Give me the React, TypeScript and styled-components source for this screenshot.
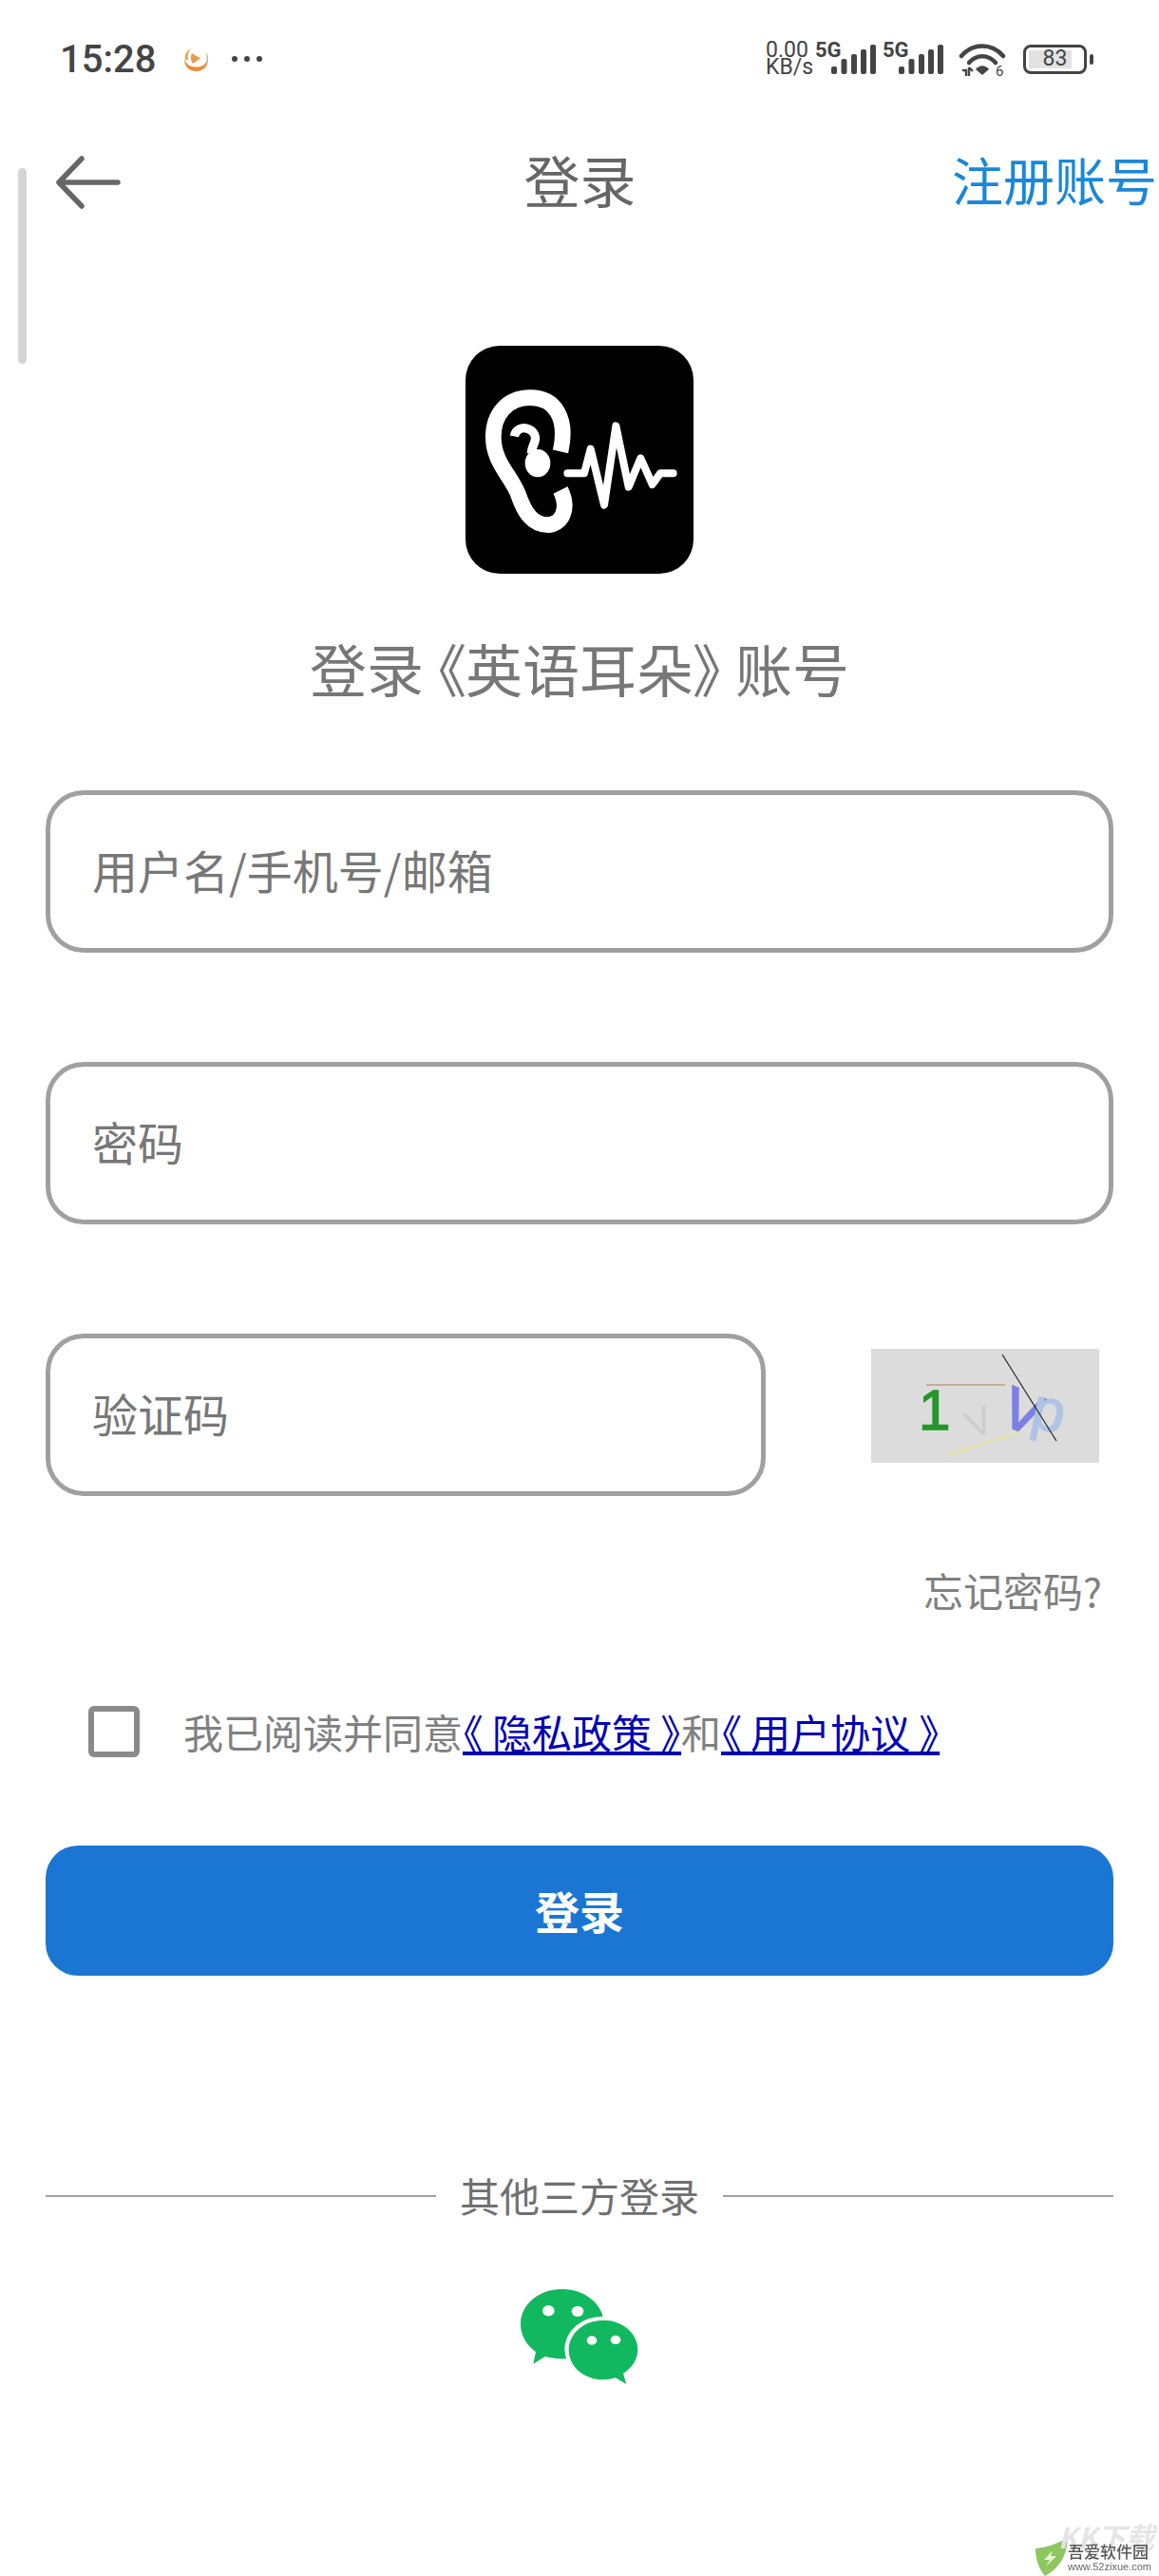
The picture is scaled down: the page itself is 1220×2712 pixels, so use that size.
import React from 'react';
import styled, { createGlobalStyle } from 'styled-components';

const GlobalStyle = createGlobalStyle`
  html, body {
    margin: 0;
    padding: 0;
    background: #fff;
  }
  * {
    box-sizing: border-box;
  }
`;

const cjk = `"Noto Sans CJK SC", "Noto Sans", sans-serif`;

function SignalBars() {
  const bars = [
    { x: 0, h: 8 },
    { x: 10.5, h: 16 },
    { x: 21, h: 21 },
    { x: 31, h: 26 },
    { x: 41, h: 31 },
  ];
  return (
    <svg width="47" height="31" viewBox="0 0 47 31">
      {bars.map((bar) => (
        <rect key={bar.x} x={bar.x} y={31 - bar.h} width="6" height={bar.h} rx="2" fill="#444" />
      ))}
    </svg>
  );
}

function WifiIcon() {
  return (
    <svg width="48" height="37" viewBox="0 0 48 37">
      <g fill="none" stroke="#444" strokeWidth="4.5" strokeLinecap="round">
        <path d="M2 15 C14 1 34 1 46 15" />
        <path d="M10 22 C18 13 30 13 38 22" />
      </g>
      <path d="M17 29 C21 24 27 24 31 29 L24 35 Z" fill="#444" />
      <path d="M3 30 H7 V36 M10 36 V27 M10 27 L14 31" fill="none" stroke="#444" strokeWidth="2.4" />
      <text x="38" y="36" fontFamily="Roboto, sans-serif" fontSize="15" fill="#444">
        6
      </text>
    </svg>
  );
}

function PlayerBadge() {
  return (
    <svg width="27" height="25" viewBox="0 0 27 25">
      <circle cx="13.5" cy="12.5" r="12.5" fill="#fff" />
      <path d="M1 12 C1 20 6 25 13.5 25 C21 25 26 20 26 12 C24 18 20 20.5 13.5 20.5 C7 20.5 3 18 1 12 Z" fill="#e98a3c" />
      <path d="M23 18 C25 16 26 14 26 11 C26 8 25 6 24 5 C25 9 25 14 23 18 Z" fill="#a9c48e" />
      <path d="M2 13 C1 7 4 3 8 1 C5 5 4 9 5 13 Z" fill="#f0a15c" />
      <path d="M9 6 L18 11.5 L10 17 C7.5 14 7.5 9 9 6 Z" fill="#eb9a52" />
    </svg>
  );
}

function EarLogo() {
  return (
    <svg width="240" height="240" viewBox="150 72 720 720">
      <path
        d="M450 406 C474 300 432 236 355 236 C280 236 238 290 238 360 C238 440 292 480 316 540 C336 600 362 638 410 638 C452 636 480 590 450 528"
        fill="none"
        stroke="#fff"
        strokeWidth="50"
      />
      <path
        d="M304 358 C308 335 330 328 346 334 C366 341 374 358 369 374 C364 390 358 396 358 412"
        fill="none"
        stroke="#fff"
        strokeWidth="28"
      />
      <ellipse cx="378" cy="443" rx="40" ry="44" fill="#fff" />
      <polyline
        points="472,475 525,475 545,398 588,575 625,325 665,518 703,427 740,510 765,475 806,475"
        fill="none"
        stroke="#fff"
        strokeWidth="24"
        strokeLinecap="round"
        strokeLinejoin="round"
      />
    </svg>
  );
}

function CaptchaImage() {
  return (
    <svg width="240" height="120" viewBox="0 0 240 120">
      <rect width="240" height="120" fill="#dcdcdc" />
      <line x1="58" y1="38" x2="141" y2="38" stroke="#b9a185" strokeWidth="1.6" />
      <line x1="80" y1="112" x2="156" y2="88" stroke="#e3e3b0" strokeWidth="3" />
      <g fontFamily="'Liberation Sans', sans-serif">
        <text x="50" y="85" fontSize="60" fill="#24962a" stroke="#24962a" strokeWidth="1.5">
          1
        </text>
        <text x="-13" y="0" fontSize="40" fill="#cdcdcd" transform="translate(118 90) rotate(-22)">
          V
        </text>
        <text x="-20" y="0" fontSize="60" fill="#7c80e6" stroke="#7c80e6" strokeWidth="2" transform="translate(152 85) rotate(22)">
          V
        </text>
        <text x="0" y="0" fontSize="62" fill="#afc4e4" stroke="#afc4e4" strokeWidth="1.5" transform="translate(166 82) rotate(12)">
          p
        </text>
      </g>
      <line x1="138" y1="6" x2="195" y2="97" stroke="#222" strokeWidth="1.2" />
    </svg>
  );
}

function WechatIcon() {
  return (
    <svg width="220" height="160" viewBox="0 0 660 480">
      <path
        d="M275 90 C348 90 405 138 408 198 L400 320 L290 310 C258 310 232 306 222 302 L184 326 L192 288 C162 266 144 236 144 200 C144 138 202 90 275 90 Z"
        fill="#12b85f"
      />
      <ellipse cx="403" cy="280" rx="120" ry="104" fill="#fff" />
      <path
        d="M405 188 C466 188 514 229 514 280 C514 312 496 340 468 356 L478 390 L444 370 C432 374 418 376 405 376 C344 376 296 334 296 282 C296 230 344 188 405 188 Z"
        fill="#12b85f"
      />
      <ellipse cx="232" cy="158" rx="19" ry="17" fill="#fff" />
      <ellipse cx="324" cy="160" rx="19" ry="17" fill="#fff" />
      <ellipse cx="369" cy="252" rx="16" ry="14" fill="#fff" />
      <ellipse cx="444" cy="250" rx="16" ry="14" fill="#fff" />
    </svg>
  );
}

// the book-title marks are narrower than a full em here, the gap next to them stays underlined
function Policy({ name }: { name: string }) {
  return (
    <PolicyLink>
      <MarkGap>《</MarkGap>
      {name.slice(0, -1)}
      <MarkGap>{name.slice(-1)}</MarkGap>》
    </PolicyLink>
  );
}

function App() {
  return (
    <Page>
      <GlobalStyle />
      <ScrollThumb />
      <StatusBar>
        <StatusLeft>
          <Clock>15:28</Clock>
          <PlayerBadge />
          <MoreDots>
            <Dot />
            <Dot />
            <Dot />
          </MoreDots>
        </StatusLeft>
        <StatusRight>
          <NetSpeed>
            <span>0.00</span>
            <span>KB/s</span>
          </NetSpeed>
          <SimSlot>
            <SimLabel>5G</SimLabel>
            <SimBars>
              <SignalBars />
            </SimBars>
          </SimSlot>
          <SimSlot>
            <SimLabel>5G</SimLabel>
            <SimBars>
              <SignalBars />
            </SimBars>
          </SimSlot>
          <WifiSlot>
            <WifiIcon />
          </WifiSlot>
          <Battery>
            <BatteryFill />
            <BatteryLevel>83</BatteryLevel>
          </Battery>
          <BatteryTip />
        </StatusRight>
      </StatusBar>

      <NavBar>
        <BackButton aria-label="返回">
          <svg width="68" height="56" viewBox="0 0 68 56">
            <path
              d="M27 3 L3 28 L27 53 M3 28 H65"
              fill="none"
              stroke="#666"
              strokeWidth="5.5"
              strokeLinecap="round"
              strokeLinejoin="round"
            />
          </svg>
        </BackButton>
        <NavTitle>登录</NavTitle>
        <RegisterLink>注册账号</RegisterLink>
      </NavBar>

      <LogoBox>
        <EarLogo />
      </LogoBox>
      <Subtitle>
        登录<BookName>《英语耳朵》</BookName>账号
      </Subtitle>

      <Form>
        <Field placeholder="用户名/手机号/邮箱" />
        <Field placeholder="密码" type="password" />
        <CaptchaRow>
          <Field placeholder="验证码" />
          <CaptchaImage />
        </CaptchaRow>
      </Form>

      <ForgotRow>忘记密码?</ForgotRow>

      <AgreementRow>
        <CheckBox />
        <AgreementText>
          我已阅读并同意
          <Policy name="隐私政策" />和
          <Policy name="用户协议" />
        </AgreementText>
      </AgreementRow>

      <LoginButton>登录</LoginButton>

      <DividerRow>
        <DividerLine />
        <DividerText>其他三方登录</DividerText>
        <DividerLine />
      </DividerRow>

      <WechatRow>
        <WechatIcon />
      </WechatRow>

      <Watermark>
        <WatermarkGhost>KK下载</WatermarkGhost>
        <svg width="35" height="40" viewBox="0 0 35 40">
          <path d="M1 11 C12 10 24 6 35 0 C34 19 26 32 11 40 C4 32 1 21 1 11 Z" fill="#8cc760" />
          <path d="M19 13 L10 23 L16 23 L12 30 L23 19 L17 19 Z" fill="#e6f3d8" />
        </svg>
        <WatermarkText>
          <WatermarkName>吾爱软件园</WatermarkName>
          <WatermarkUrl>www.52zixue.com</WatermarkUrl>
        </WatermarkText>
      </Watermark>
    </Page>
  );
}

const Page = styled.div`
  position: relative;
  width: 1220px;
  height: 2712px;
  overflow: hidden;
  background: #fff;
  font-family: ${cjk};
`;

const ScrollThumb = styled.div`
  position: absolute;
  left: 19px;
  top: 177px;
  width: 9px;
  height: 206px;
  border-radius: 5px;
  background: #d4d4d4;
`;

const StatusBar = styled.div`
  display: flex;
  justify-content: space-between;
  align-items: center;
  height: 124px;
  padding: 0 69px 0 63px;
  color: #444;
`;

const StatusLeft = styled.div`
  display: flex;
  align-items: center;
  gap: 29px;
`;

const Clock = styled.span`
  font-family: Roboto, sans-serif;
  font-size: 40px;
  font-weight: 500;
`;

const MoreDots = styled.div`
  display: flex;
  gap: 7px;
  margin-left: -5px;
`;

const Dot = styled.span`
  width: 6px;
  height: 6px;
  border-radius: 50%;
  background: #444;
`;

const StatusRight = styled.div`
  display: flex;
  align-items: center;
`;

const NetSpeed = styled.div`
  display: flex;
  flex-direction: column;
  width: 52px;
  font-family: Roboto, sans-serif;
  font-size: 23px;
  line-height: 18px;
`;

const SimSlot = styled.div`
  position: relative;
  width: 71px;
  height: 34px;
`;

const SimLabel = styled.span`
  position: absolute;
  left: 0;
  top: -2px;
  font-family: Roboto, sans-serif;
  font-size: 22px;
  line-height: 20px;
  font-weight: 700;
`;

const SimBars = styled.div`
  position: absolute;
  left: 17px;
  top: 2px;
`;

const WifiSlot = styled.div`
  display: flex;
  margin-left: 10px;

  svg {
    overflow: visible;
  }
`;

const Battery = styled.div`
  position: relative;
  display: flex;
  align-items: center;
  justify-content: center;
  width: 67px;
  height: 31px;
  margin-left: 19px;
  border: 3.5px solid #444;
  border-radius: 8px;
`;

const BatteryFill = styled.div`
  position: absolute;
  left: 3px;
  top: 3px;
  bottom: 3px;
  width: 45px;
  background: #e2e2e2;
`;

const BatteryLevel = styled.span`
  position: relative;
  font-family: Roboto, sans-serif;
  font-size: 23px;
  line-height: 24px;
`;

const BatteryTip = styled.div`
  width: 4px;
  height: 11px;
  margin-left: 3px;
  border-radius: 2px;
  background: #444;
`;

const NavBar = styled.div`
  display: grid;
  grid-template-columns: 1fr auto 1fr;
  align-items: center;
  height: 136px;
  padding: 0 2px 0 3px;
`;

const BackButton = styled.div`
  display: flex;
  align-items: center;
  margin-left: 56px;
`;

const NavTitle = styled.h1`
  margin: 0 0 6px;
  font-size: 59px;
  font-weight: 400;
  line-height: 80px;
  color: #666;
`;

const RegisterLink = styled.span`
  justify-self: end;
  margin-bottom: 6px;
  font-size: 54px;
  line-height: 80px;
  color: #1a87d9;
`;

const LogoBox = styled.div`
  width: 240px;
  height: 240px;
  margin: 104px auto 0;
  border-radius: 36px;
  overflow: hidden;
  background: #000;

  svg {
    display: block;
  }
`;

const Subtitle = styled.h2`
  margin: 59px 0 0;
  font-size: 60px;
  font-weight: 400;
  line-height: 80px;
  text-align: center;
  color: #777;
`;

const BookName = styled.span`
  padding: 0 14px;
  font-feature-settings: "palt";
`;

const Form = styled.div`
  display: flex;
  flex-direction: column;
  gap: 115px;
  margin-top: 89px;
  padding: 0 48px;
`;

const Field = styled.input`
  display: block;
  width: 100%;
  height: 171px;
  padding: 0 44px 5px;
  border: 5px solid #a0a0a0;
  border-radius: 40px;
  outline: none;
  background: #fff;
  font-family: ${cjk};
  font-size: 48px;

  &::placeholder {
    color: #777;
    opacity: 1;
  }
`;

const CaptchaRow = styled.div`
  display: grid;
  grid-template-columns: 758px 240px;
  column-gap: 111px;
  align-items: start;

  svg {
    margin-top: 16px;
  }
`;

const ForgotRow = styled.div`
  margin-top: 69px;
  padding-right: 60px;
  font-size: 42px;
  line-height: 60px;
  text-align: right;
  color: #808080;
`;

const AgreementRow = styled.div`
  display: flex;
  align-items: center;
  gap: 46px;
  height: 54px;
  margin-top: 92px;
  padding-left: 93px;
`;

const CheckBox = styled.span`
  width: 54px;
  height: 54px;
  border: 6px solid #8a8a8a;
  border-radius: 6px;
  background: #fff;
`;

const AgreementText = styled.div`
  font-size: 42px;
  line-height: 54px;
  white-space: nowrap;
  color: #808080;
`;

const PolicyLink = styled.a`
  color: #0000b4;
  font-feature-settings: "palt";
  text-decoration: underline;
`;

const MarkGap = styled.span`
  letter-spacing: 10px;
`;

const LoginButton = styled.button`
  display: block;
  width: 1124px;
  height: 137px;
  margin: 93px 48px 0;
  padding: 0 0 3px;
  border: none;
  border-radius: 34px;
  background: #1b76d3;
  font-family: ${cjk};
  font-size: 47px;
  font-weight: 700;
  color: #fff;
`;

const DividerRow = styled.div`
  display: flex;
  align-items: center;
  gap: 25px;
  height: 60px;
  margin-top: 202px;
  padding: 0 48px;
`;

const DividerLine = styled.div`
  flex: 1;
  height: 2px;
  background: #a0a0a0;
`;

const DividerText = styled.span`
  margin-bottom: 3px;
  font-size: 42px;
  line-height: 60px;
  color: #707070;
`;

const WechatRow = styled.div`
  display: flex;
  justify-content: center;
  margin-top: 38px;
`;

const Watermark = styled.div`
  position: absolute;
  right: 8px;
  bottom: 0;
  display: flex;
  align-items: flex-end;
  filter: blur(0.5px);
`;

const WatermarkGhost = styled.span`
  position: absolute;
  right: -3px;
  bottom: 26px;
  font-size: 30px;
  line-height: 32px;
  font-weight: 700;
  font-style: italic;
  white-space: nowrap;
  color: #e4e4e4;
`;

const WatermarkText = styled.div`
  position: relative;
  display: flex;
  flex-direction: column;
  padding-bottom: 3px;
`;

const WatermarkName = styled.span`
  font-size: 17px;
  line-height: 18px;
  font-weight: 500;
  color: #555;
`;

const WatermarkUrl = styled.span`
  font-family: "Liberation Sans", sans-serif;
  font-size: 11px;
  line-height: 14px;
  color: #666;
`;

export default App;
